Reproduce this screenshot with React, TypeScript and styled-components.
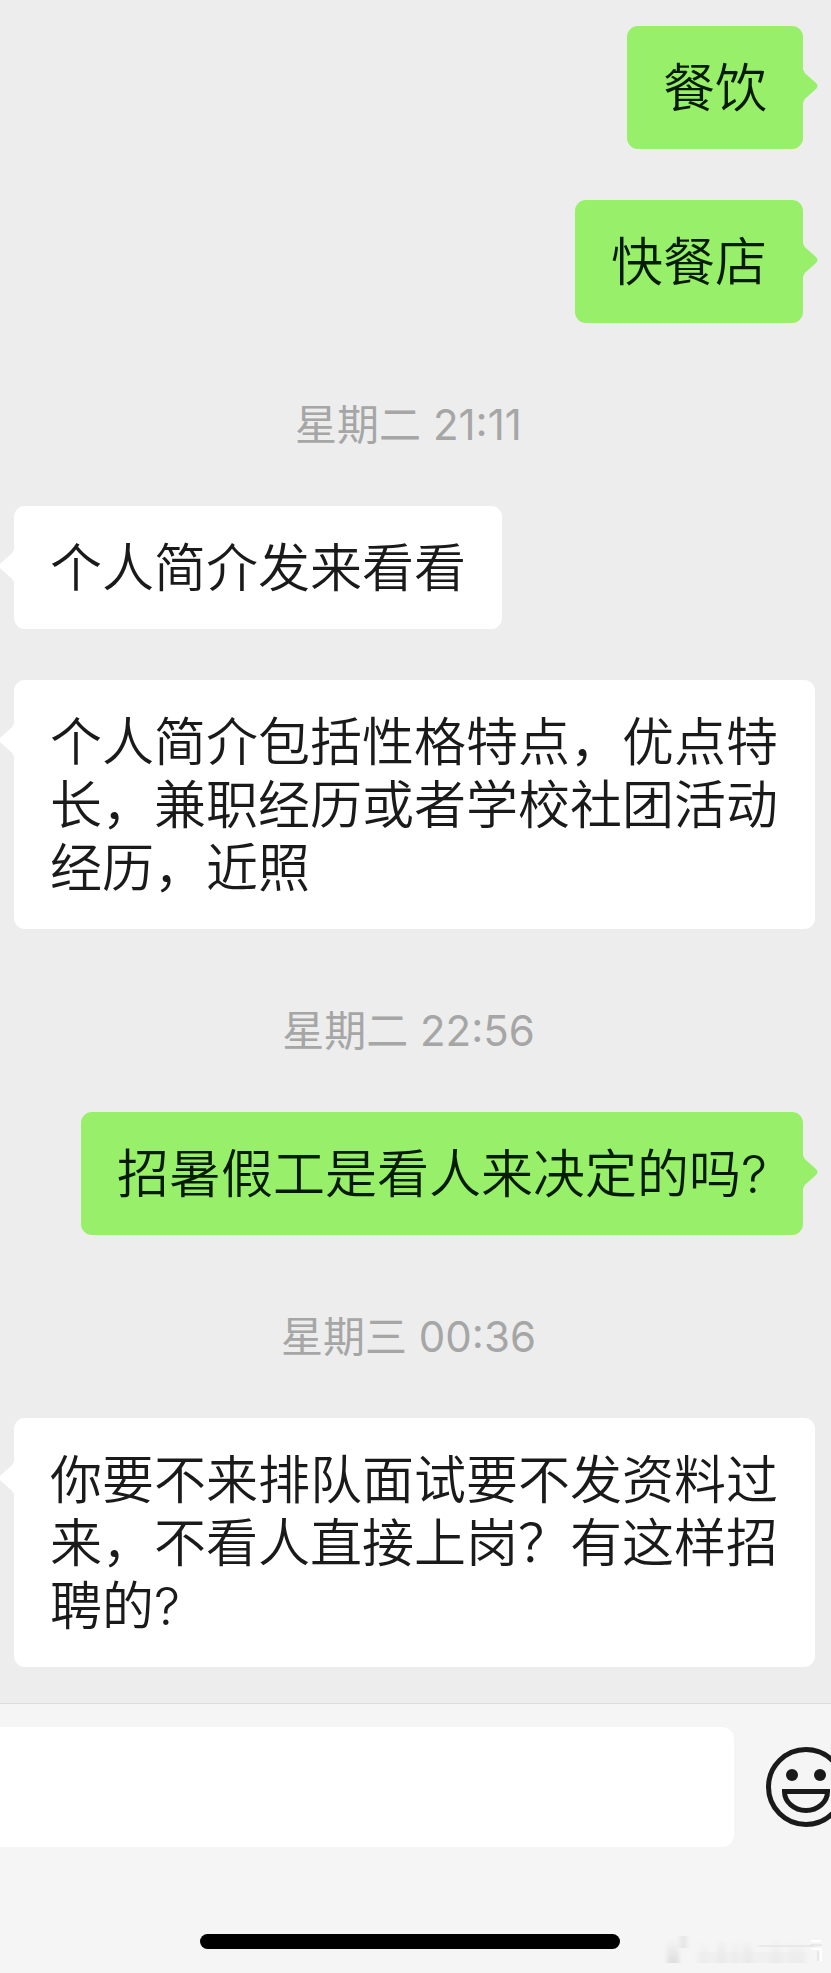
import React from "react"
import styled, { createGlobalStyle } from "styled-components"

type Side = "me" | "them"

type ChatItem =
    | { kind: "time"; text: string }
    | { kind: "message"; side: Side; text: string }

const chatItems: ChatItem[] = [
    { kind: "message", side: "me", text: "餐饮" },
    { kind: "message", side: "me", text: "快餐店" },
    { kind: "time", text: "星期二 21:11" },
    { kind: "message", side: "them", text: "个人简介发来看看" },
    { kind: "message", side: "them", text: "个人简介包括性格特点，优点特长，兼职经历或者学校社团活动经历，近照" },
    { kind: "time", text: "星期二 22:56" },
    { kind: "message", side: "me", text: "招暑假工是看人来决定的吗?" },
    { kind: "time", text: "星期三 00:36" },
    { kind: "message", side: "them", text: "你要不来排队面试要不发资料过来，不看人直接上岗？有这样招聘的?" },
]

const GlobalStyle = createGlobalStyle`
    * {
        box-sizing: border-box;
    }

    body {
        margin: 0;
        background: #ededed;
        font-family: Inter, "Noto Sans CJK SC", sans-serif;
    }
`

const Page = styled.div`
    display: flex;
    flex-direction: column;
    min-height: 100vh;
    overflow: hidden;
`

const Messages = styled.main`
    flex: 1;
    display: flex;
    flex-direction: column;
    gap: 51px;
    padding: 26px 16px 36px 14px;
`

const Row = styled.div<{ $side: Side }>`
    display: flex;
    justify-content: ${({ $side }) => $side === "me" ? "flex-end" : "flex-start"};
    padding-right: ${({ $side }) => $side === "me" ? "12px" : "0"};
`

const Bubble = styled.div<{ $side: Side }>`
    position: relative;
    padding: 31px 36px 29px;
    border-radius: 11px;
    background: ${({ $side }) => $side === "me" ? "#98ef69" : "#ffffff"};
    color: ${({ $side }) => $side === "me" ? "#061c02" : "#1a1a1a"};
    font-size: 52px;
    font-weight: 350;
    line-height: 63px;
`

const Tail = styled.svg<{ $side: Side }>`
    position: absolute;
    top: 43px;
    width: 15px;
    height: 34px;
    fill: ${({ $side }) => $side === "me" ? "#98ef69" : "#ffffff"};
    ${({ $side }) => $side === "me" ? "left: 100%;" : "right: 100%; transform: scaleX(-1);"}
`

const Time = styled.time`
    padding: 21px 12px 0 0;
    color: #a6a6a6;
    font-size: 42px;
    line-height: 60px;
    text-align: center;
`

const Footer = styled.footer`
    position: relative;
    border-top: 1px solid #dcdcdc;
    background: #f5f5f5;
`

const Composer = styled.div`
    display: flex;
    align-items: center;
    gap: 32px;
    padding-top: 23px;
`

const TextInput = styled.input`
    flex: 1;
    min-width: 0;
    height: 120px;
    padding: 0 36px;
    border: 0;
    border-radius: 0 12px 12px 0;
    background: #ffffff;
    font: inherit;
    font-size: 52px;
    outline: none;
`

const EmojiButton = styled.button`
    flex: none;
    width: 80px;
    height: 80px;
    margin-right: -15px;
    padding: 0;
    border: 0;
    background: none;
    color: #1a1a1a;

    svg {
        display: block;
    }
`

const HomeArea = styled.div`
    display: flex;
    justify-content: center;
    padding: 87px 12px 24px 0;
`

const HomeIndicator = styled.div`
    width: 420px;
    height: 15px;
    border-radius: 8px;
    background: #000000;
`

const Watermark = styled.svg`
    position: absolute;
    right: 8px;
    bottom: 8px;
    width: 160px;
    height: 30px;
`

const BubbleTail: React.FunctionComponent<{ side: Side }> = ({ side }) => (
    <Tail $side={side} viewBox="0 0 15 34" aria-hidden="true">
        <path d="M0 0C1 3 2 5 4 6L13 14Q16 17 13 20L4 28C2 29 1 31 0 34Z" />
    </Tail>
)

const SmileIcon: React.FunctionComponent = () => (
    <svg width="80" height="80" viewBox="0 0 80 80" fill="none" stroke="currentColor" strokeWidth="5">
        <circle cx="40" cy="40" r="37.5" />
        <circle cx="26" cy="28" r="6" fill="currentColor" stroke="none" />
        <circle cx="54" cy="28" r="6" fill="currentColor" stroke="none" />
        <path d="M18.5 44.5H61.5A21.5 19 0 0 1 18.5 44.5Z" />
    </svg>
)

// x, width and opacity of each faded streak
const streaks = [
    [4, 12, 0.6],
    [36, 9, 0.2],
    [54, 9, 0.45],
    [69, 7, 0.3],
    [80, 9, 0.45],
    [108, 10, 0.35],
    [126, 14, 0.25],
]

const FadedMark: React.FunctionComponent = () => (
    <Watermark viewBox="0 0 160 30" aria-hidden="true">
        <defs>
            <linearGradient id="fade" x1="0" y1="0" x2="0" y2="1">
                <stop offset="0" stopColor="#cfcfcf" stopOpacity="0" />
                <stop offset="1" stopColor="#cfcfcf" />
            </linearGradient>
            <filter id="soft">
                <feGaussianBlur stdDeviation="2 0.5" />
            </filter>
        </defs>
        <g filter="url(#soft)">
            {streaks.map(([x, width, opacity]) => (
                <rect key={x} x={x} y="4" width={width} height="24" fill="url(#fade)" opacity={opacity} />
            ))}
            <rect x="17" y="1" width="7" height="12" fill="#e6e6e6" />
            <rect x="95" y="10" width="56" height="2" fill="#e8e8e8" />
            <rect x="34" y="17" width="110" height="11" fill="#ececec" opacity="0.6" />
        </g>
        <path d="M148 6H158M148 14H158V26" fill="none" stroke="#ffffff" strokeWidth="2" />
        <path d="M147 10H159M155 16V26" fill="none" stroke="#dcdcdc" />
    </Watermark>
)

const App: React.FunctionComponent = () => {
    return (
        <>
            <GlobalStyle />
            <Page>
                <Messages>
                    {chatItems.map((item, index) => {
                        if (item.kind === "time") {
                            return <Time key={index}>{item.text}</Time>
                        }
                        return (
                            <Row $side={item.side} key={index}>
                                <Bubble $side={item.side}>
                                    {item.text}
                                    <BubbleTail side={item.side} />
                                </Bubble>
                            </Row>
                        )
                    })}
                </Messages>

                <Footer>
                    <Composer>
                        <TextInput type="text" aria-label="输入消息" />
                        <EmojiButton type="button" aria-label="表情">
                            <SmileIcon />
                        </EmojiButton>
                    </Composer>
                    <HomeArea>
                        <HomeIndicator />
                    </HomeArea>
                    <FadedMark />
                </Footer>
            </Page>
        </>
    )
}

export default App
